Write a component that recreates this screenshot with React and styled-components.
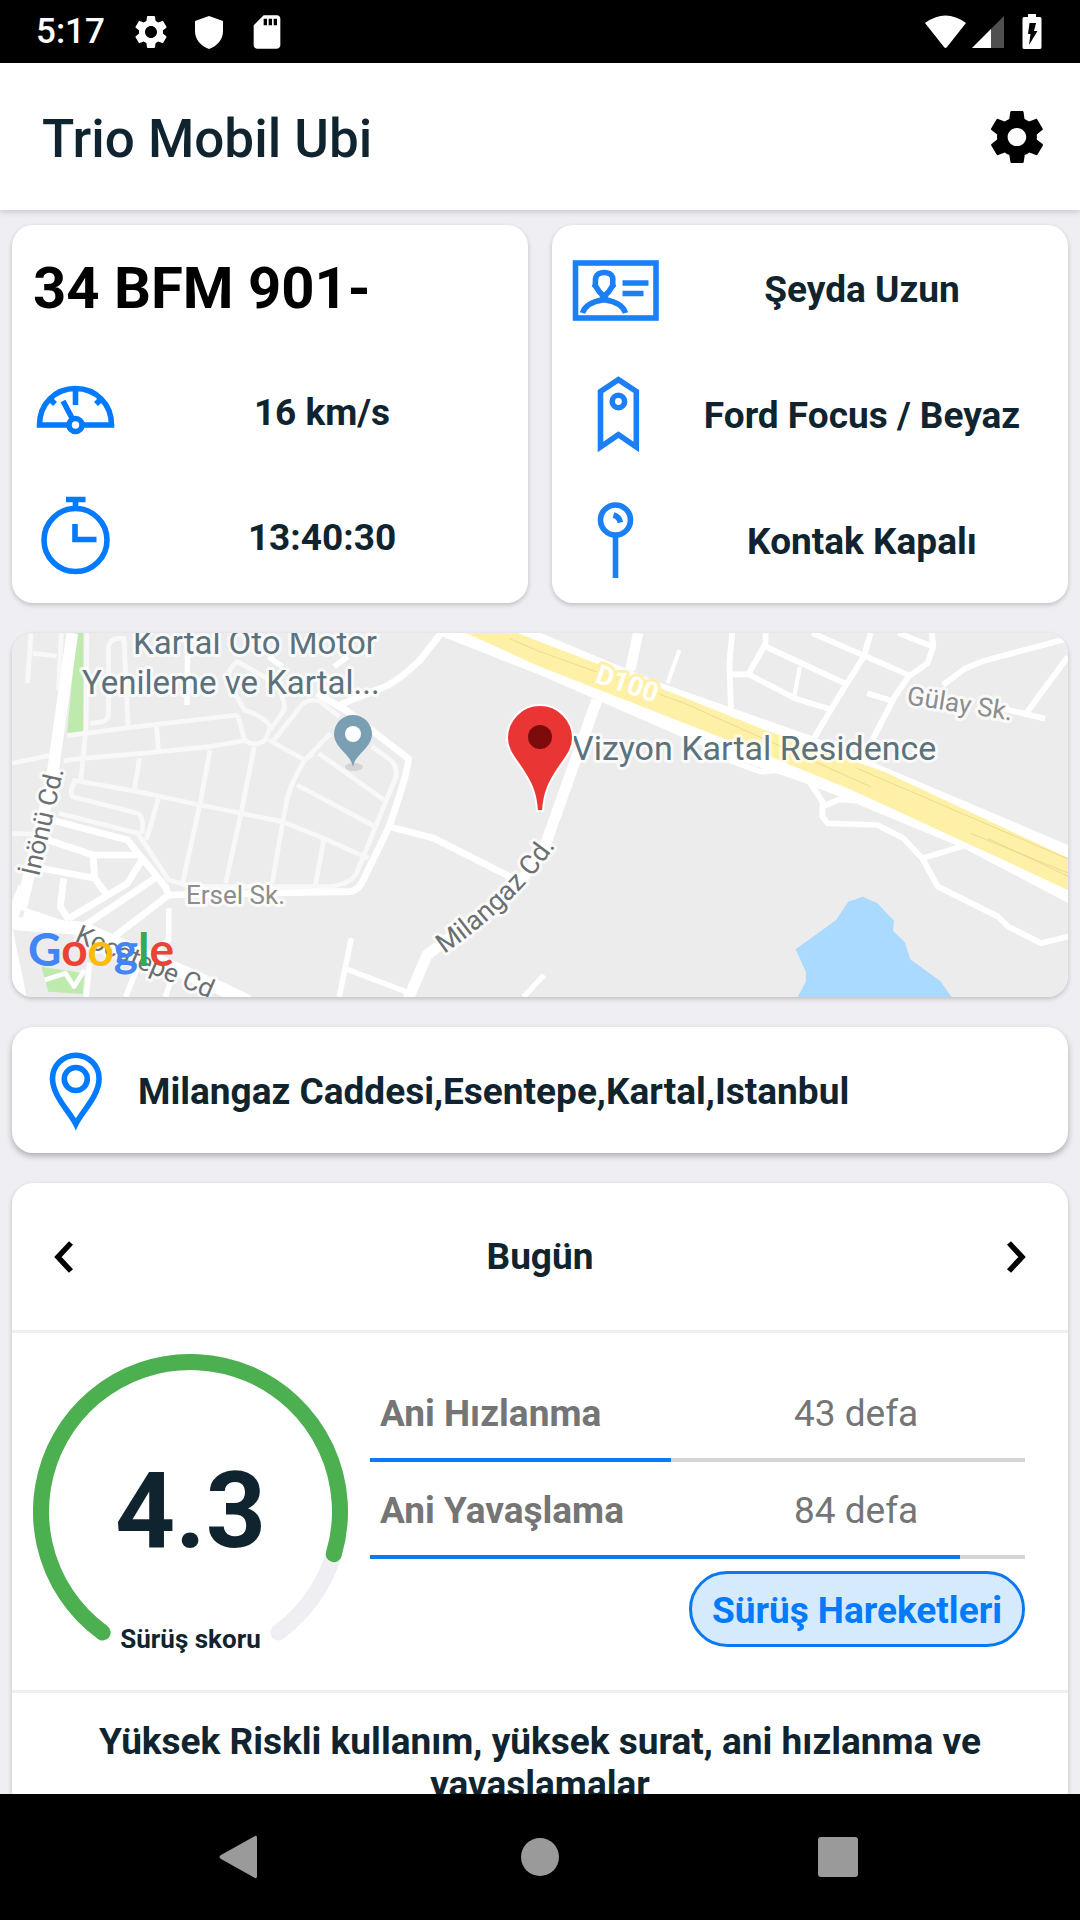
import React from 'react';
import styled, { createGlobalStyle } from 'styled-components';
import { MdSettings, MdSdCard } from 'react-icons/md';
import { IoMdSettings } from 'react-icons/io';

const GlobalStyle = createGlobalStyle`
  * {
    box-sizing: border-box;
  }
  body {
    margin: 0;
    font-family: Roboto, "Liberation Sans", sans-serif;
    color: #10242f;
    background-color: #eeeef3;
  }
  h1, h2, p {
    margin: 0;
  }
`
const StScreen = styled.div`
  height: 100vh;
  display: flex;
  flex-direction: column;
  overflow: hidden;
`
const StStatusBar = styled.div`
  flex: none;
  height: 63px;
  padding: 0 36px;
  display: flex;
  align-items: center;
  justify-content: space-between;
  background-color: black;
  color: white;
  font-size: 35px;
  font-weight: 500;
`
const StStatusGroup = styled.div`
  display: flex;
  align-items: center;
  gap: ${(props) => props.$gap}px;
`
const StClock = styled.span`
  margin-right: 8px;
`
const StHeader = styled.header`
  flex: none;
  height: 147px;
  padding: 0 31px 0 42px;
  display: flex;
  align-items: center;
  justify-content: space-between;
  background-color: white;
  box-shadow: 0 2px 6px rgba(0, 0, 0, 0.16);
  z-index: 1;
`
const StTitle = styled.h1`
  padding-top: 4px;
  font-size: 53px;
  line-height: 62px;
  font-weight: 500;
`
const StIconBtn = styled.button`
  border: none;
  padding: 0;
  background: none;
  display: flex;
  color: ${(props) => props.$color || 'black'};
`
const StContent = styled.main`
  flex: 1;
  min-height: 0;
  overflow: hidden;
  padding: 15px 12px 0;
  display: flex;
  flex-direction: column;
  gap: 30px;
`
const StCards = styled.div`
  flex: none;
  display: grid;
  grid-template-columns: 1fr 1fr;
  gap: 24px;
`
const StCard = styled.section`
  flex: none;
  background-color: white;
  border-radius: 21px;
  overflow: hidden;
  box-shadow: 0 2px 5px rgba(0, 0, 0, 0.2);
`
const StInfoCard = styled(StCard)`
  display: grid;
  grid-auto-rows: 1fr;
  min-height: 378px;
  padding-bottom: ${(props) => props.$bottom || 0}px;
`
const StRow = styled.div`
  display: flex;
  align-items: center;
  min-height: 124px;
`
const StPlate = styled.h2`
  padding: 2px 0 0 21px;
  font-size: 58px;
  line-height: 68px;
  font-weight: 700;
  color: black;
`
const StIconCell = styled.div`
  flex: none;
  width: 104px;
  padding-left: 24px;
  display: flex;
  justify-content: center;
`
const StLineIcon = styled.svg`
  flex: none;
  width: 88px;
  height: 88px;
  fill: none;
  stroke: ${(props) => props.$color || '#007aff'};
  stroke-width: 5.6;
`
const StInfoText = styled.p`
  flex: 1;
  padding-top: 2px;
  text-align: center;
  font-size: 37px;
  line-height: 43px;
  font-weight: 700;
`
const StAddressCard = styled(StCard)`
  display: flex;
  align-items: center;
  min-height: 126px;
  box-shadow: 0 3px 6px rgba(0, 0, 0, 0.28);
`
const StAddress = styled.p`
  padding: 2px 0 0 22px;
  font-size: 37px;
  line-height: 43px;
  font-weight: 700;
`
const StMap = styled.svg`
  display: block;
  width: 100%;
  height: auto;
`
const StMapLabel = styled.text`
  font-family: Roboto, sans-serif;
  font-size: ${(props) => props.$size}px;
  font-weight: ${(props) => props.$weight || 400};
  fill: ${(props) => props.$color};
  stroke: ${(props) => props.$halo || 'rgba(255, 255, 255, 0.7)'};
  stroke-width: 6px;
  stroke-linejoin: round;
  paint-order: stroke;
`
const StLogo = styled.text`
  font-family: Lato, sans-serif;
  font-size: 46px;
  font-weight: 700;
`
const StDayBar = styled.div`
  min-height: 147px;
  padding: 0 42px;
  display: flex;
  align-items: center;
  justify-content: space-between;
  font-size: 37px;
  line-height: 43px;
  font-weight: 700;
`
const StScore = styled.div`
  display: flex;
  gap: 22px;
  padding: 21px 43px 21px 21px;
  border-top: 3px solid #efeff0;
  border-bottom: 3px solid #efeff0;
`
const StGauge = styled.div`
  flex: none;
  display: grid;
  justify-items: center;
  > * {
    grid-area: 1 / 1;
  }
`
const StGaugeSvg = styled.svg`
  width: 315px;
  height: 315px;
  fill: none;
  stroke-width: 16;
  stroke-linecap: round;
`
const StScoreValue = styled.strong`
  align-self: center;
  font-size: 105px;
  line-height: 124px;
  font-weight: 700;
`
const StScoreLabel = styled.span`
  align-self: end;
  margin-bottom: 15px;
  font-size: 26px;
  line-height: 30px;
  font-weight: 700;
`
const StStats = styled.div`
  flex: 1;
  padding-top: 11px;
  display: flex;
  flex-direction: column;
`
const StStat = styled.div`
  padding: 3px 0 0 10px;
  display: grid;
  grid-template-columns: 10fr 11fr;
  align-items: center;
  height: 93px;
  font-size: 37px;
  line-height: 43px;
  color: #757575;
`
const StStatName = styled.span`
  font-weight: 700;
`
const StStatValue = styled.span`
  text-align: center;
`
const StTrack = styled.div`
  height: 4px;
  background-color: #d4d4d9;
`
const StFill = styled.div`
  height: 100%;
  background-color: #0a7af5;
`
const StPillBtn = styled.button`
  align-self: flex-end;
  margin-top: 12px;
  height: 76px;
  padding: 2px 20px 0;
  border: 3px solid #0a78f0;
  border-radius: 38px;
  background-color: #d6eafd;
  color: #007aff;
  font-family: inherit;
  font-size: 37px;
  line-height: 43px;
  font-weight: 700;
`
const StComment = styled.p`
  padding: 27px 60px;
  text-align: center;
  font-size: 37px;
  line-height: 43px;
  font-weight: 700;
`
const StNavBar = styled.nav`
  flex: none;
  height: 126px;
  padding: 0 208px;
  display: flex;
  align-items: center;
  justify-content: space-between;
  background-color: black;
  z-index: 1;
`

const soft = '#1b80f8'

const SpeedIcon = () => (
  <StLineIcon viewBox="0 0 88 88">
    <path d="M35 57H7.500C7.500 36 23 20.500 43.500 20.500S79.500 36 79.500 57H52" />
    <circle cx="43.500" cy="57" r="6.500" />
    <path d="M40.500 51L31 33M43.500 20V37M17 30L23 36M70 30L64 36" />
  </StLineIcon>
)

const WatchIcon = () => (
  <StLineIcon viewBox="0 0 88 88">
    <circle cx="43.500" cy="47" r="31.500" />
    <path d="M34 6.500H53.500M43.500 6V14M43 31V46.500H64.500" />
  </StLineIcon>
)

const IdIcon = () => (
  <StLineIcon viewBox="0 0 88 88" $color={soft}>
    <rect x="3.500" y="19" width="80.500" height="55" />
    <path d="M10.500 69C13 61 21 57.500 30.500 56V51C25.500 47 25.500 44 23 41.500C24.200 38.500 22.600 36 24 33C26.500 27 38 27 40.500 33C41.400 36 40 38.500 41 41.500C38.500 44 38.500 47 33.500 51V56C43 57.500 51 61 53.500 69" />
    <path d="M50.500 39H76.500M50.500 49.500H71.500" />
  </StLineIcon>
)

const TagIcon = () => (
  <StLineIcon viewBox="0 0 88 88" $color={soft}>
    <path d="M28.500 21.500L46.400 9.700L64.300 21.500V77L46.400 64.700L28.500 77Z" />
    <circle cx="46.400" cy="31.500" r="6.200" />
  </StLineIcon>
)

const KeyIcon = () => (
  <StLineIcon viewBox="0 0 88 88" $color={soft}>
    <circle cx="43.500" cy="24" r="15" />
    <path d="M43.500 39V82M41.500 19C45 20 47.500 22.500 48.500 26.500" />
  </StLineIcon>
)

const PlaceIcon = () => (
  <StLineIcon viewBox="0 0 88 88">
    <path d="M43.800 78C38 66 20.500 50 20.500 32.500a23.300 23.300 0 0 1 46.600 0C67.100 50 49.500 66 43.800 78Z" />
    <circle cx="43.800" cy="33" r="11.500" />
  </StLineIcon>
)

const Arrow = ({ d }) => (
  <svg width="20" height="32" viewBox="0 0 20 32" fill="none" stroke="black" strokeWidth="5.500">
    <path d={d} />
  </svg>
)

/** Skor halkasi: 288 derecelik yay, alt kismi acik */
function Gauge({ value, ratio }) {
  const arc = (degrees) => {
    const point = (deg) => {
      const rad = (deg * Math.PI) / 180
      return `${157.5 + 149.5 * Math.cos(rad)} ${157.5 + 149.5 * Math.sin(rad)}`
    }
    return `M${point(126)}A149.5 149.5 0 ${degrees > 180 ? 1 : 0} 1 ${point(126 + degrees)}`
  }
  return (
    <StGauge>
      <StGaugeSvg viewBox="0 0 315 315">
        <path d={arc(288)} stroke="#eeeef3" />
        <path d={arc(288 * ratio)} stroke="#4caf50" />
      </StGaugeSvg>
      <StScoreValue>{value}</StScoreValue>
      <StScoreLabel>Sürüş skoru</StScoreLabel>
    </StGauge>
  )
}

function Stat({ name, count, percent }) {
  return (
    <>
      <StStat>
        <StStatName>{name}</StStatName>
        <StStatValue>{count} defa</StStatValue>
      </StStat>
      <StTrack role="progressbar" aria-label={name} aria-valuenow={percent}>
        <StFill style={{ width: `${percent}%` }} />
      </StTrack>
    </>
  )
}

function VehicleMap() {
  return (
    <StMap viewBox="12 633 1056 364">
      <rect x="12" y="633" width="1056" height="364" fill="#ececec" />

      {/* bati tarafi */}
      <g transform="translate(0 620) scale(0.3444 0.3333)" fill="none" strokeLinejoin="round">
        <path d="M222 39H242V335L195 340Z M120 1040L245 1060L240 1122L140 1115Z" fill="#bfeaae" />
        <g stroke="#f8f8f8" strokeWidth="14">
          <path d="M35 430L150 405M185 422L240 415L410 400L610 380L720 360M195 347L380 322L690 285M252 40L250 320L235 480" />
          <path d="M262 310L300 305Q315 300 315 280V80Q320 55 345 55H360L372 320M90 40L80 190M95 100L165 108M178 40L170 210" />
          <path d="M690 285L710 360Q740 385 770 360L785 320Q770 290 710 270L665 190Q655 150 690 125L800 190Q830 240 825 270L785 330" />
          <path d="M795 360L880 250Q900 235 930 245L985 290M780 360L885 420L960 340M910 400L885 420Q850 480 835 530L822 600L790 790" />
          <path d="M925 400L1115 540M862 495L1090 620M210 480L400 515L580 555L700 580L820 605L940 655L1070 715" />
          <path d="M405 415L390 510M455 320L460 395M610 390L580 555L530 790M738 380L700 580L655 790M940 660L915 800" />
          <path d="M225 480Q200 500 210 530L400 580Q420 590 412 640M460 535L425 660M35 640L140 645" />
          <path d="M170 580L400 640L490 780L560 800H960Q1020 790 1035 760L1150 470Q1155 430 1120 410L1080 380" />
        </g>
        <g stroke="#ffffff" strokeWidth="20">
          <path d="M545 70L543 255M780 110L820 140M970 140L1010 110" strokeWidth="16" />
          <path d="M1280 40L1220 120Q1150 190 1105 205L985 255L1185 415Q1190 440 1130 620L1050 790Q1030 820 1000 815L490 825" />
          <path d="M920 220L1010 275M1130 620L1260 655L1500 780" />
          <path d="M150 600L370 660L480 800L490 825L320 960M140 660L270 705H410M270 705L275 775L310 825" />
          <path d="M120 745L275 775M185 775L175 860L200 900M415 715L370 790L200 895M450 775L240 920" />
          <path d="M490 865V960L440 1000M260 1030L250 1131M400 1040L365 1131M500 1070L480 1131" strokeWidth="16" />
          <path d="M1020 955L985 1131M1000 1045L1190 1120M1520 1131L1580 1065" strokeWidth="16" />
          <path d="M210 40L150 480L60 870" strokeWidth="34" />
          <path d="M70 800L20 930L60 1131M70 880L200 925" strokeWidth="34" />
          <path d="M35 910L240 925L640 1105L720 1145" strokeWidth="40" />
          <path d="M130 1080L190 1060L215 1100L245 1050" strokeWidth="14" />
          <path d="M1180 1150L1240 1005L1500 800L1578 690L1733 240" strokeWidth="32" />
        </g>
      </g>

      {/* dogu tarafi, D100 ve golet */}
      <g transform="translate(540 620) scale(0.3444 0.3333)" fill="none" strokeLinejoin="round">
        <g stroke="#ffffff" strokeWidth="17">
          <path d="M285 39L262 150" strokeWidth="30" />
          <path d="M405 90L370 190M755 140L738 230" strokeWidth="12" />
          <path d="M558 39L550 130L555 280M555 163H605L655 70V39M605 163L740 235L840 267M655 80L885 190M790 39L1070 165" />
          <path d="M960 39L940 110L885 200L795 355M1040 39L1140 80M1138 39L1142 80L1125 130L1070 170L1030 230L965 360M950 220L1020 242" />
          <path d="M1170 195L1235 145L1290 122L1525 58M1533 110L1410 282M1340 265L1467 296" />
          <path d="M785 490L820 545V590L835 610L980 615L1055 655L1110 715L1155 800L1330 890L1360 920L1455 970L1540 948" />
          <path d="M820 560L870 538L960 545M1110 715L1230 678M800 495L880 520M550 420L640 455L710 450" />
        </g>
        <path d="M-288 30L-50 15L0 38L340 185L780 345L1540 678V853L1230 685L800 500L520 400L0 165L-288 48Z" fill="#ffffff" />
        <path d="M-235 30L-100 25L0 65L340 200L640 325L1000 455L1540 717V813L900 508L680 415L160 205L0 140Z" fill="#fff0a8" />
        <path d="M-90 55L0 95L420 250L960 500M920 445L1540 720M1250 640L1540 762M1300 655L1540 772" stroke="#e3cf86" strokeWidth="2" />
        <path d="M748 1131L772 1085V1055L742 988L860 900L895 845L937 830L980 850L1028 903L1025 932L1060 968L1075 1018L1162 1083L1195 1131Z" fill="#aadaff" />
      </g>

      <StMapLabel x="133" y="654" $size="33" $color="#5b727d">Kartal Oto Motor</StMapLabel>
      <StMapLabel x="82" y="694" $size="33" $color="#5b727d">Yenileme ve Kartal...</StMapLabel>
      <StMapLabel x="572" y="760" $size="34" $color="#5b727d">Vizyon Kartal Residence</StMapLabel>
      <StMapLabel x="186" y="904" $size="26" $color="#8d8d8d">Ersel Sk.</StMapLabel>
      <StMapLabel transform="translate(906 704) rotate(9)" $size="26" $color="#8d8d8d">Gülay Sk.</StMapLabel>
      <StMapLabel transform="translate(39 877) rotate(-77)" $size="26" $color="#6c6f72">İnönü Cd.</StMapLabel>
      <StMapLabel transform="translate(74 941) rotate(23)" $size="26" $color="#6c6f72">Kocatepe Cd</StMapLabel>
      <StMapLabel transform="translate(594 682) rotate(19)" $size="27" $weight={700} $color="white" $halo="#fff0a8">D100</StMapLabel>
      <path id="milangaz" d="M444 954Q520 902 562 836" fill="none" />
      <StMapLabel $size="27" $color="#6c6f72"><textPath href="#milangaz">Milangaz Cd.</textPath></StMapLabel>

      <ellipse cx="354" cy="767" rx="9" ry="4" fill="#d4d4d4" />
      <path d="M353 767C351 754 334 748 334 734a19 19 0 0 1 38 0C372 748 355 754 353 767Z" fill="#7a9fb2" />
      <circle cx="353" cy="734" r="8" fill="white" />

      <path d="M537 811C536 792 530 781 522 769C514 757 507 750 507 738A33 33 0 0 1 573 738C573 750 566 757 558 769C550 781 544 792 543 811Z" fill="#ea3535" stroke="white" strokeWidth="2" />
      <circle cx="540" cy="737" r="12" fill="#7d0b0b" />

      <StLogo x="28" y="966">
        <tspan fill="#4285f4">G</tspan>
        <tspan fill="#ea4335">o</tspan>
        <tspan fill="#fbbc05">o</tspan>
        <tspan fill="#4285f4">g</tspan>
        <tspan fill="#34a853">l</tspan>
        <tspan fill="#ea4335">e</tspan>
      </StLogo>
    </StMap>
  )
}

function App() {
  return (
    <StScreen>
      <GlobalStyle />
      <StStatusBar>
        <StStatusGroup $gap={18}>
          <StClock>5:17</StClock>
          <MdSettings size={40} />
          <svg width="40" height="40" viewBox="0 0 40 40" fill="white">
            <path d="M20 4L34 9V19C34 28 28 34 20 37C12 34 6 28 6 19V9Z" />
          </svg>
          <MdSdCard size={40} />
        </StStatusGroup>
        <StStatusGroup $gap={6}>
          <svg width="41" height="34" viewBox="0 0 41 34" fill="white">
            <path d="M0 8Q20.500 -7 41 8L22 32Q20.500 34 19 32Z" />
          </svg>
          <svg width="32" height="32" viewBox="0 0 32 32">
            <path d="M32 0V32H0Z" fill="#505050" />
            <path d="M19 13V32H0Z" fill="white" />
          </svg>
          <svg width="34" height="35" viewBox="0 0 34 35" fill="white">
            <path d="M18 0H26V3H30Q31.500 3 31.500 5V33Q31.500 35 30 35H14Q12.500 35 12.500 33V5Q12.500 3 14 3H18Z" />
            <path d="M19.500 9H26L24 17H27.500L19 31L20.500 20H18Z" fill="black" />
          </svg>
        </StStatusGroup>
      </StStatusBar>

      <StHeader>
        <StTitle>Trio Mobil Ubi</StTitle>
        <StIconBtn aria-label="Ayarlar"><IoMdSettings size={64} /></StIconBtn>
      </StHeader>

      <StContent>
        <StCards>
          <StInfoCard $bottom={4}>
            <StRow><StPlate>34 BFM 901-</StPlate></StRow>
            <StRow>
              <StIconCell><SpeedIcon /></StIconCell>
              <StInfoText>16 km/s</StInfoText>
            </StRow>
            <StRow>
              <StIconCell><WatchIcon /></StIconCell>
              <StInfoText>13:40:30</StInfoText>
            </StRow>
          </StInfoCard>
          <StInfoCard>
            <StRow>
              <StIconCell><IdIcon /></StIconCell>
              <StInfoText>Şeyda Uzun</StInfoText>
            </StRow>
            <StRow>
              <StIconCell><TagIcon /></StIconCell>
              <StInfoText>Ford Focus / Beyaz</StInfoText>
            </StRow>
            <StRow>
              <StIconCell><KeyIcon /></StIconCell>
              <StInfoText>Kontak Kapalı</StInfoText>
            </StRow>
          </StInfoCard>
        </StCards>

        <StCard><VehicleMap /></StCard>

        <StAddressCard>
          <StIconCell><PlaceIcon /></StIconCell>
          <StAddress>Milangaz Caddesi,Esentepe,Kartal,Istanbul</StAddress>
        </StAddressCard>

        <StCard>
          <StDayBar>
            <StIconBtn aria-label="Önceki gün"><Arrow d="M17 2L4 16L17 30" /></StIconBtn>
            <span>Bugün</span>
            <StIconBtn aria-label="Sonraki gün"><Arrow d="M3 2L16 16L3 30" /></StIconBtn>
          </StDayBar>
          <StScore>
            <Gauge value="4.3" ratio={0.87} />
            <StStats>
              <Stat name="Ani Hızlanma" count={43} percent={46} />
              <Stat name="Ani Yavaşlama" count={84} percent={90} />
              <StPillBtn>Sürüş Hareketleri</StPillBtn>
            </StStats>
          </StScore>
          <StComment>Yüksek Riskli kullanım, yüksek surat, ani hızlanma ve yavaşlamalar</StComment>
        </StCard>
      </StContent>

      <StNavBar>
        <StIconBtn aria-label="Geri">
          <svg width="64" height="64" viewBox="0 0 64 64" fill="#9a9a9a">
            <path d="M47 11Q49 10 49 13V51Q49 54 47 53L13 34Q10 32 13 30Z" />
          </svg>
        </StIconBtn>
        <StIconBtn aria-label="Ana ekran">
          <svg width="64" height="64" viewBox="0 0 64 64" fill="#9a9a9a">
            <circle cx="32" cy="32" r="19" />
          </svg>
        </StIconBtn>
        <StIconBtn aria-label="Son uygulamalar">
          <svg width="64" height="64" viewBox="0 0 64 64" fill="#9a9a9a">
            <rect x="10" y="12" width="40" height="40" rx="3" />
          </svg>
        </StIconBtn>
      </StNavBar>
    </StScreen>
  );
}

export default App;
